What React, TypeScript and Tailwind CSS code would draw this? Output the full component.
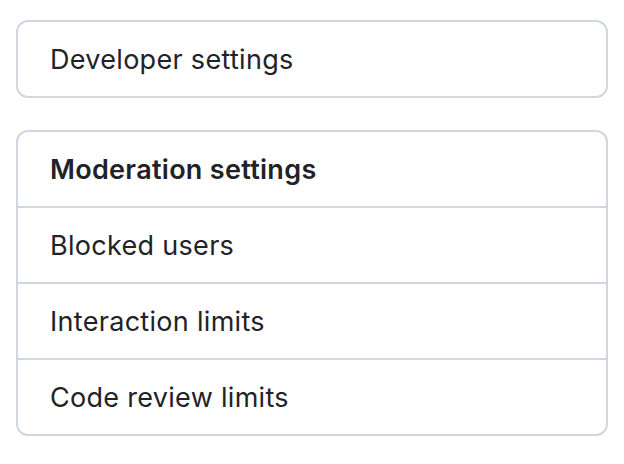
import React from "react";

const items = ["Blocked users", "Interaction limits", "Code review limits"];

export default function App() {
  return (
    <div
      className="min-h-[464px] bg-white px-4 pt-5 text-[#1f2328]"
      style={{ fontFamily: "Inter, 'Liberation Sans', sans-serif" }}
    >
      <div className="rounded-[12px] border-2 border-[#d0d7de]">
        <div className="px-8 pb-[21px] pt-[23px] text-[27px] leading-[30px] tracking-[0.3px]">Developer settings</div>
      </div>

      <div className="mt-8 divide-y-2 divide-[#d0d7de] rounded-[12px] border-2 border-[#d0d7de]">
        <div className="px-8 pb-[21px] pt-[23px] text-[27px] font-semibold leading-[30px] tracking-[0.3px]">
          Moderation settings
        </div>
        {items.map((label) => (
          <div key={label} className="px-8 pb-[21px] pt-[23px] text-[27px] leading-[30px] tracking-[0.3px]">
            {label}
          </div>
        ))}
      </div>
    </div>
  );
}
